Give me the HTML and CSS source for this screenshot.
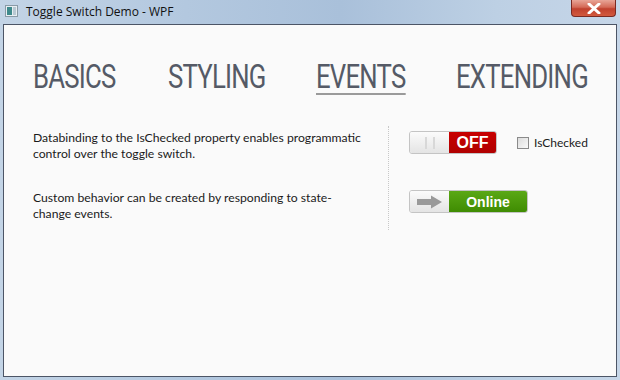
FILE: index.html
```html
<!DOCTYPE html>
<html>
<head>
<meta charset="utf-8">
<link rel="stylesheet" href="styles.css">
</head>
<body>
<div class="window">
  <div class="titlebar">
    <div class="title-left">
      <svg class="app-icon" width="13" height="12" viewBox="0 0 13 12">
        <rect x="0.5" y="0.5" width="12" height="11" fill="#e8eef2" stroke="#8a9aa6"/>
        <rect x="2" y="2" width="5" height="8" fill="#3f8a8c"/>
        <rect x="8" y="2" width="3" height="8" fill="#b9c9d3"/>
      </svg>
      <span class="title-text">Toggle Switch Demo - WPF</span>
    </div>
    <div class="close-btn">
      <svg width="14" height="11" viewBox="0 0 14 11">
        <path d="M2 1 L12 10 M12 1 L2 10" stroke="#fff" stroke-width="3" stroke-linecap="round"/>
      </svg>
    </div>
  </div>
  <div class="client">
    <nav class="tabs">
      <div class="tab-slot"><span class="tab">BASICS</span></div>
      <div class="tab-slot"><span class="tab">STYLING</span></div>
      <div class="tab-slot"><span class="tab active">EVENTS</span></div>
      <div class="tab-slot"><span class="tab">EXTENDING</span></div>
    </nav>
    <div class="content">
      <div class="texts">
        <p>Databinding to the IsChecked property enables programmatic control over the toggle switch.</p>
        <p>Custom behavior can be created by responding to state-change events.</p>
      </div>
      <div class="divider"></div>
      <div class="controls">
        <div class="row first">
          <div class="toggle off">
            <div class="thumb"><span class="grip"></span></div>
            <div class="label red">OFF</div>
          </div>
          <label class="check"><span class="box"></span>IsChecked</label>
        </div>
        <div class="row second">
          <div class="toggle online">
            <div class="thumb">
              <svg width="28" height="14" viewBox="0 0 28 14">
                <path d="M1 4 H15 V0.5 L26 7 L15 13.5 V10 H1 Z" fill="#9a9a9a"/>
              </svg>
            </div>
            <div class="label green">Online</div>
          </div>
        </div>
      </div>
    </div>
  </div>
</div>
</body>
</html>
```

FILE: styles.css
```css
html, body {
  margin: 0;
  padding: 0;
}
body {
  width: 620px;
  height: 380px;
  overflow: hidden;
  font-family: "Lato", "Open Sans", sans-serif;
}
.window {
  width: 620px;
  height: 380px;
  box-sizing: border-box;
  background: linear-gradient(90deg, #c3d4e6 0%, #b3c8df 30%, #a9c0da 55%, #bdd0e4 80%, #c6d6e8 100%);
  padding: 0 3px 3px 3px;
  display: flex;
  flex-direction: column;
}
.titlebar {
  height: 24px;
  display: flex;
  justify-content: space-between;
  align-items: flex-start;
}
.title-left {
  display: flex;
  align-items: center;
  height: 22px;
  padding-left: 2px;
}
.app-icon {
  margin-right: 8px;
}
.title-text {
  font-family: "Open Sans", sans-serif;
  font-size: 12px;
  color: #111;
}
.close-btn {
  width: 45px;
  height: 17px;
  margin-right: 1px;
  border: 1px solid #7a2a22;
  border-top: none;
  border-radius: 0 0 4px 4px;
  background: linear-gradient(#e8a597 0%, #d46a57 45%, #c0412e 55%, #d25a3e 100%);
  display: flex;
  align-items: center;
  justify-content: center;
  box-sizing: border-box;
}
.client {
  flex: 1;
  background: #fafafa;
  border: 1px solid #4c5566;
  display: flex;
  flex-direction: column;
}
.tabs {
  display: grid;
  grid-template-columns: 135px 148px 140px auto;
  padding: 37px 0 0 29px;
}
.tab-slot {
  white-space: nowrap;
}
.tab {
  display: inline-block;
  transform: scaleX(0.78);
  transform-origin: left center;
  font-family: "Roboto", sans-serif;
  font-weight: 400;
  font-size: 33px;
  color: #555a66;
  line-height: 30px;
  padding-bottom: 1px;
  letter-spacing: -1px;
}
.tab.active {
  border-bottom: 2px solid #9a9a9a;
}
.content {
  display: flex;
  padding-top: 35px;
  padding-left: 29px;
}
.texts {
  width: 330px;
  margin-right: 25px;
  font-size: 12.2px;
  color: #1a1a1a;
  line-height: 16px;
}
.texts p {
  margin: 0 0 28px 0;
}
.divider {
  width: 0;
  height: 104px;
  border-left: 1px dotted #c8c8c8;
  margin-top: -4px;
}
.controls {
  padding-left: 20px;
  display: flex;
  flex-direction: column;
}
.row {
  display: flex;
  align-items: center;
}
.row.first {
  margin-top: 1px;
}
.row.second {
  margin-top: 36px;
}
.toggle {
  display: flex;
  height: 23px;
  border: 1px solid #c4c4c4;
  border-radius: 3px;
  overflow: hidden;
  box-sizing: border-box;
}
.toggle.off { width: 88px; }
.toggle.online { width: 119px; }
.thumb {
  width: 39px;
  background: linear-gradient(#fbfbfb, #e4e4e4);
  display: flex;
  align-items: center;
  justify-content: center;
}
.grip {
  width: 6px;
  height: 12px;
  border-left: 2px solid #d8d8d8;
  border-right: 2px solid #d8d8d8;
}
.label {
  flex: 1;
  font-family: "Liberation Sans", Arial, sans-serif;
  font-weight: bold;
  font-size: 14px;
  color: #fff;
  display: flex;
  align-items: center;
  justify-content: center;
}
.label.red {
  background: linear-gradient(#c80000, #b00000);
  font-size: 16px;
}
.label.green {
  background: linear-gradient(#5aa816, #3f8c02);
}
.check {
  display: flex;
  align-items: center;
  margin-left: 20px;
  font-size: 12px;
  color: #1a1a1a;
}
.box {
  width: 12px;
  height: 12px;
  border: 1px solid #8a8a8a;
  background: linear-gradient(135deg, #dcdcdc, #fafafa);
  margin-right: 5px;
  box-sizing: border-box;
}
```
